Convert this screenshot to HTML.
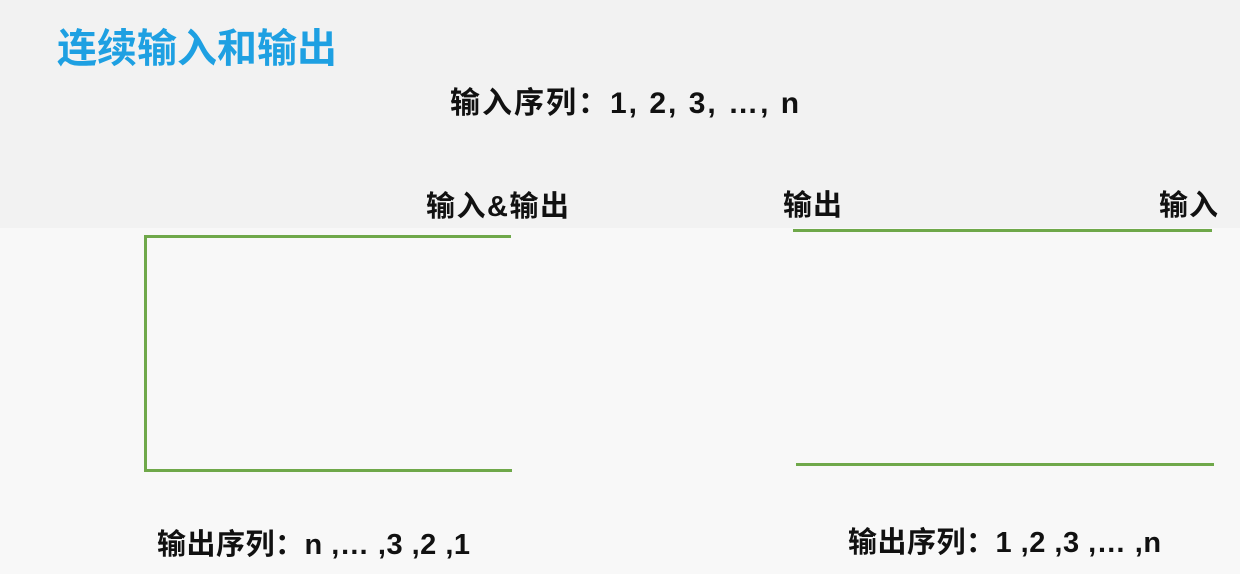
<!DOCTYPE html>
<html><head><meta charset="utf-8"><style>
body{margin:0;width:1240px;height:574px;overflow:hidden;background:#f8f8f8;position:relative;font-family:"Liberation Sans","Noto Sans CJK SC",sans-serif;font-weight:bold;color:#111}
.top{position:absolute;left:0;top:0;width:1240px;height:228px;background:#f2f2f2}
.t{position:absolute;white-space:nowrap;line-height:1}
.l{position:absolute;background:#6fa84a}
</style></head><body>
<div class="top"></div>
<div class="t" style="left:57px;top:29px;font-size:40px;color:#1ea0e2;letter-spacing:0px">连续输入和输出</div>
<div class="t" style="left:450px;top:89px;font-size:30px;letter-spacing:2px">输入序列：1, 2, 3, …, n</div>
<div class="t" style="left:426px;top:193px;font-size:29px;letter-spacing:1.5px">输入&amp;输出</div>
<div class="t" style="left:783px;top:192px;font-size:29px;letter-spacing:1px">输出</div>
<div class="t" style="left:1159px;top:192px;font-size:29px;letter-spacing:1px">输入</div>
<div class="l" style="left:144px;top:235px;width:367px;height:3px"></div>
<div class="l" style="left:144px;top:235px;width:3px;height:237px"></div>
<div class="l" style="left:144px;top:469px;width:368px;height:3px"></div>
<div class="l" style="left:793px;top:229px;width:419px;height:3px"></div>
<div class="l" style="left:796px;top:463px;width:418px;height:3px"></div>
<div class="t" style="left:157px;top:531px;font-size:29px;letter-spacing:0.5px">输出序列：n ,… ,3 ,2 ,1</div>
<div class="t" style="left:848px;top:529px;font-size:29px;letter-spacing:0.5px">输出序列：1 ,2 ,3 ,… ,n</div>
</body></html>
